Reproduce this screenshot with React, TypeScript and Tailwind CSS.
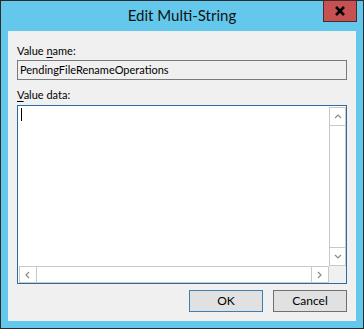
import React from "react";

const font = { fontFamily: "Lato, 'Liberation Sans', sans-serif" };

const Chevron = ({ dir }: { dir: "up" | "down" | "left" | "right" }) => {
    const pts = {
        up: "1,5 4,2 7,5",
        down: "1,2 4,5 7,2",
        left: "5,1 2,4 5,7",
        right: "2,1 5,4 2,7",
    }[dir];
    return (
        <svg width="8" height="8" viewBox="0 0 8 8">
            <polyline points={pts} fill="none" stroke="#8a8a8a" strokeWidth="1.2" />
        </svg>
    );
};

const App = () => {
    return (
        <div
            className="w-[364px] h-[329px] border border-[#2b2b2b] bg-[#63c8ec] flex flex-col text-black"
            style={font}
        >
            {/* title bar */}
            <div className="relative h-[30px] flex items-center justify-center shrink-0">
                <span className="text-[15px] text-[#111] leading-none pb-[1px]">Edit Multi-String</span>
                <div className="absolute top-[-1px] right-[6px] w-[34px] h-[22px] bg-[#c75050] border border-[#4a2a2a] flex items-center justify-center">
                    <svg width="12" height="10" viewBox="0 0 12 10">
                        <path d="M2 1 L10 9 M10 1 L2 9" stroke="#000" strokeWidth="2.6" />
                    </svg>
                </div>
            </div>

            {/* client */}
            <div className="mx-[7px] h-[290px] bg-[#f0f0f0] flex flex-col pl-[9px] text-[11px] leading-[14px]">
                <div className="mt-[13px] h-[14px]">
                    Value <span className="underline underline-offset-2">n</span>ame:
                </div>
                <div className="mt-[2px] w-[330px] h-[20px] border border-[#7a7a7a] bg-[#f0f0f0] flex items-center pl-[2px]">
                    PendingFileRenameOperations
                </div>
                <div className="mt-[8px] h-[14px]">
                    <span className="underline underline-offset-2">V</span>alue data:
                </div>
                <div className="mt-[3px] w-[330px] h-[179px] border border-[#2f6a9f] bg-white grid grid-cols-[1fr_17px] grid-rows-[1fr_17px]">
                    <div className="pl-[3px] pt-[2px]">
                        <div className="w-[1px] h-[13px] bg-black" />
                    </div>
                    <div className="border border-[#c8c8c8] flex flex-col justify-between mt-[1px]">
                        <div className="h-[18px] border-b border-[#c8c8c8] flex items-center justify-center">
                            <Chevron dir="up" />
                        </div>
                        <div className="h-[18px] border-t border-[#c8c8c8] flex items-center justify-center">
                            <Chevron dir="down" />
                        </div>
                    </div>
                    <div className="border border-[#c8c8c8] flex justify-between ml-[1px]">
                        <div className="w-[17px] border-r border-[#c8c8c8] flex items-center justify-center">
                            <Chevron dir="left" />
                        </div>
                        <div className="w-[17px] border-l border-[#c8c8c8] flex items-center justify-center">
                            <Chevron dir="right" />
                        </div>
                    </div>
                    <div className="bg-[#f0f0f0]" />
                </div>
                <div className="mt-[6px] flex gap-[10px] pl-[172px]">
                    <button className="w-[74px] h-[22px] border border-[#3c7fb1] bg-[#e1e1e1] text-[12px]">OK</button>
                    <button className="w-[74px] h-[22px] border border-[#707070] bg-[#e1e1e1] text-[12px]">Cancel</button>
                </div>
            </div>
        </div>
    );
};

export default App;
